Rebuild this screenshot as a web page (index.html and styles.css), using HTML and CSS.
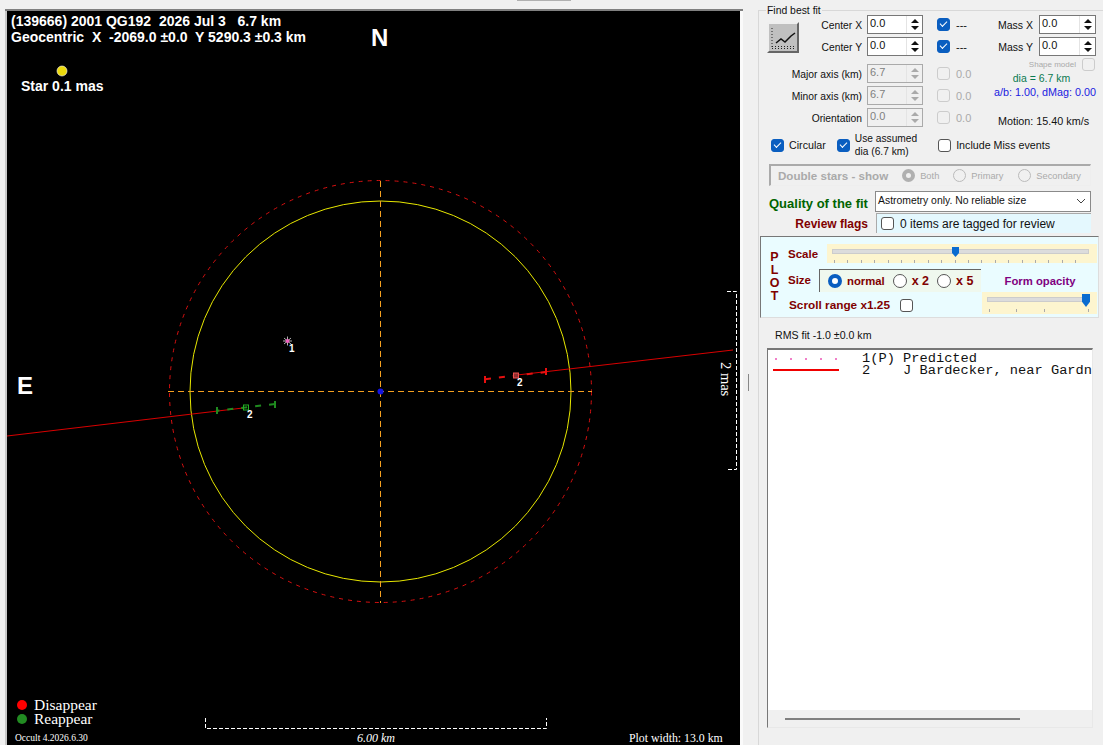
FILE: index.html
```html
<!DOCTYPE html>
<html lang="en">
<head>
  <meta charset="UTF-8" />
  <title>Asteroid observations - plot</title>
  <link rel="stylesheet" href="styles.css">
</head>
<body>

<div class="top-tab"></div>

<div class="window">
  <div class="plot-frame">
    <svg class="plot" width="733" height="734" viewBox="7 11 733 734">
      <rect x="7" y="11" width="733" height="734" fill="#000"/>

      <text class="title" x="11" y="26">(139666) 2001 QG192&#160; 2026 Jul 3&#160;&#160; 6.7 km</text>
      <text class="title" x="11" y="42">Geocentric&#160; X&#160; -2069.0 ±0.0&#160; Y 5290.3 ±0.3 km</text>
      <text class="compass" x="371" y="46">N</text>
      <text class="compass" x="17" y="394">E</text>

      <circle cx="62" cy="71" r="5" fill="#ecd90c" stroke="#fff" stroke-width="0.6"/>
      <text class="title" x="21" y="91">Star 0.1 mas</text>

      <circle cx="380.5" cy="391.5" r="211" class="limit"/>
      <circle cx="380.5" cy="391.5" r="190.5" class="outline"/>
      <line x1="380.5" y1="181" x2="380.5" y2="603" class="axis"/>
      <line x1="168" y1="391.5" x2="592" y2="391.5" class="axis"/>
      <circle cx="380.5" cy="391.5" r="3" fill="#1414e0"/>

      <!-- predicted star -->
      <g class="star-mark">
        <line x1="283" y1="341" x2="292" y2="341"/>
        <line x1="287.5" y1="336.5" x2="287.5" y2="345.5"/>
        <line x1="284" y1="338" x2="291" y2="344"/>
        <line x1="284" y1="344" x2="291" y2="338"/>
      </g>
      <circle cx="287.5" cy="341" r="2" fill="#f060c0"/>
      <text class="chord-no" x="289" y="352">1</text>

      <!-- chord 2 -->
      <line x1="7" y1="436" x2="243" y2="408" class="chord"/>
      <line x1="517" y1="375" x2="733" y2="350" class="chord"/>

      <line x1="217" y1="407" x2="217" y2="414" class="re"/>
      <line x1="275" y1="401" x2="275" y2="408" class="re"/>
      <line x1="275" y1="404" x2="217" y2="410.7" class="re re-dash"/>
      <rect x="243.5" y="405" width="5" height="5" class="re-box"/>
      <text class="chord-no" x="247" y="418">2</text>

      <line x1="485" y1="376" x2="485" y2="383" class="dis"/>
      <line x1="546" y1="368" x2="546" y2="375" class="dis"/>
      <line x1="485" y1="379.2" x2="546" y2="372" class="dis dis-dash"/>
      <rect x="513.5" y="373" width="5" height="5" class="dis-box"/>
      <text class="chord-no" x="517" y="386">2</text>

      <!-- scale bars -->
      <polyline points="205.5,718 205.5,728.5 546.5,728.5 546.5,718" class="bar"/>
      <polyline points="727,291.5 736.5,291.5 736.5,469.5 727,469.5" class="bar"/>
      <text class="bar-km" x="357" y="742">6.00 km</text>
      <text class="bar-mas" transform="translate(721 362) rotate(90)">2 mas</text>

      <circle cx="22" cy="705" r="5" fill="#ff0000"/>
      <circle cx="22" cy="719" r="5" fill="#228b22"/>
      <text class="legend" x="34" y="710">Disappear</text>
      <text class="legend" x="34" y="724">Reappear</text>
      <text class="version" x="15" y="741">Occult 4.2026.6.30</text>
      <text class="plot-width" x="629" y="742">Plot width: 13.0 km</text>
    </svg>
  </div>

  <div class="splitter"><span></span></div>

  <div class="side">
    <div class="group">
      <div class="group-title">Find best fit</div>

      <div class="fit-top">
        <div class="fit-grid">
          <div class="chart-btn">
            <svg width="28" height="27" viewBox="0 0 28 27">
              <path d="M3 4 V24" class="chart-dots"/>
              <path d="M3 22.5 H26" class="chart-dots"/>
              <path d="M3 24.5 H26" class="chart-dots"/>
              <path d="M7 19 L12 15 L16 18 L22 12 L26 9" class="chart-line"/>
            </svg>
          </div>

          <label class="lbl">Center X</label>
          <div class="spin"><span>0.0</span><div class="arrows"><i class="up"></i><i class="down"></i></div></div>
          <div class="check on"></div>
          <span class="val">---</span>

          <label class="lbl">Center Y</label>
          <div class="spin"><span>0.0</span><div class="arrows"><i class="up"></i><i class="down"></i></div></div>
          <div class="check on"></div>
          <span class="val">---</span>

          <label class="lbl">Major axis (km)</label>
          <div class="spin off"><span>6.7</span><div class="arrows"><i class="up"></i><i class="down"></i></div></div>
          <div class="check off"></div>
          <span class="val off">0.0</span>

          <label class="lbl">Minor axis (km)</label>
          <div class="spin off"><span>6.7</span><div class="arrows"><i class="up"></i><i class="down"></i></div></div>
          <div class="check off"></div>
          <span class="val off">0.0</span>

          <label class="lbl">Orientation</label>
          <div class="spin off"><span>0.0</span><div class="arrows"><i class="up"></i><i class="down"></i></div></div>
          <div class="check off"></div>
          <span class="val off">0.0</span>
        </div>

        <div class="mass">
          <div class="mass-row"><label>Mass X</label><div class="spin"><span>0.0</span><div class="arrows"><i class="up"></i><i class="down"></i></div></div></div>
          <div class="mass-row"><label>Mass Y</label><div class="spin"><span>0.0</span><div class="arrows"><i class="up"></i><i class="down"></i></div></div></div>
          <div class="shape"><span>Shape model</span><div class="check off"></div></div>
          <div class="dia">dia = 6.7 km</div>
          <div class="ab">a/b: 1.00, dMag: 0.00</div>
          <div class="motion">Motion: 15.40 km/s</div>
        </div>
      </div>

      <div class="opts">
        <div class="opt"><div class="check on"></div><span>Circular</span></div>
        <div class="opt opt-dia"><div class="check on"></div><span>Use assumed<br>dia (6.7 km)</span></div>
        <div class="opt"><div class="check"></div><span>Include Miss events</span></div>
      </div>

      <div class="double">
        <b>Double stars - show</b>
        <div class="radio-off sel"></div><span class="both">Both</span>
        <div class="radio-off"></div><span class="prim">Primary</span>
        <div class="radio-off"></div><span>Secondary</span>
      </div>

      <div class="quality">
        <b>Quality of the fit</b>
        <div class="combo"><span>Astrometry only. No reliable size</span>
          <svg width="10" height="6" viewBox="0 0 10 6"><path d="M1 1 L5 5 L9 1" class="combo-arrow"/></svg>
        </div>
      </div>
      <div class="review">
        <b>Review flags</b>
        <div class="flags"><div class="check"></div><span>0 items are tagged for review</span></div>
      </div>

      <div class="plot-box">
        <div class="letters">P<br>L<br>O<br>T</div>
        <div class="plot-ctl">
          <div class="scale-row">
            <b>Scale</b>
            <div class="slider slider-scale"><div class="track"></div><div class="thumb"></div><div class="ticks"></div></div>
          </div>
          <div class="ctl-low">
            <div class="ctl-left">
              <div class="size-row">
                <b>Size</b>
                <div class="size-box">
                  <div class="radio sel"></div><b>normal</b>
                  <div class="radio"></div><b class="times">x 2</b>
                  <div class="radio"></div><b class="times">x 5</b>
                </div>
              </div>
              <div class="scroll-row"><b>Scroll range x1.25</b><div class="check"></div></div>
            </div>
            <div class="ctl-right">
              <div class="opacity-lbl">Form opacity</div>
              <div class="slider slider-opacity"><div class="track"></div><div class="thumb"></div><div class="ticks"></div></div>
            </div>
          </div>
        </div>
      </div>

      <div class="rms">RMS fit -1.0 ±0.0 km</div>

      <div class="listbox">
        <div class="list-body">
          <div class="list-row"><span class="swatch dots"></span><pre>1(P) Predicted</pre></div>
          <div class="list-row"><span class="swatch solid"></span><pre>2    J Bardecker, near Gardn</pre></div>
        </div>
        <div class="hscroll"><span></span></div>
      </div>
    </div>
  </div>
</div>

</body>
</html>
```
FILE: styles.css
```css
html, body {
  margin: 0;
  height: 100%;
  overflow: hidden;
}
body {
  background: #f0f0f0;
  font-family: 'Liberation Sans', Arial, sans-serif;
  font-size: 11px;
  color: #111;
  width: 1103px;
  height: 745px;
  position: relative;
}
b { font-weight: bold; }

.top-tab {
  position: absolute;
  left: 517px;
  top: 0;
  width: 54px;
  height: 1px;
  background: #b0b0b0;
}

.window {
  display: flex;
  height: 745px;
}

/* plot */
.plot-frame {
  margin: 9px 0 0 5px;
  padding: 2px 3px 0 2px;
  background: linear-gradient(#808080, #808080) top left / 100% 2px no-repeat,
              linear-gradient(#c8c8c8, #c8c8c8) top left / 2px 100% no-repeat,
              #fafafa;
  width: 733px;
  height: 734px;
}
.plot { display: block; }

.title { font: bold 14px 'Liberation Sans', Arial, sans-serif; fill: #fff; }
.compass { font: bold 24px 'Liberation Sans', Arial, sans-serif; fill: #fff; }
.chord-no { font: bold 10px 'Liberation Sans', Arial, sans-serif; fill: #fff; }
.legend { font: 15.5px 'Liberation Serif', 'Times New Roman', serif; fill: #fff; }
.version { font: 9.5px 'Liberation Serif', 'Times New Roman', serif; fill: #fff; }
.plot-width { font: 11.8px 'Liberation Serif', 'Times New Roman', serif; fill: #fff; }
.bar-km { font: italic 12px 'Liberation Serif', 'Times New Roman', serif; fill: #fff; }
.bar-mas { font: 14.5px 'Liberation Serif', 'Times New Roman', serif; fill: #fff; }

.limit { fill: none; stroke: #d81010; stroke-width: 1; stroke-dasharray: 4 5; }
.outline { fill: none; stroke: #e8e800; stroke-width: 1; }
.axis { stroke: #f5a020; stroke-width: 1; stroke-dasharray: 6 4; }
.star-mark line { stroke: #b0b0b0; stroke-width: 1; }
.chord { stroke: #d80000; stroke-width: 1; }
.re { stroke: #1f8a1f; stroke-width: 2; }
.re-dash { stroke-dasharray: 6 8; }
.re-box { fill: none; stroke: #22b022; stroke-width: 1; }
.dis { stroke: #e81010; stroke-width: 2; }
.dis-dash { stroke-dasharray: 6 8; }
.dis-box { fill: #903030; stroke: #f05050; stroke-width: 1; }
.bar { fill: none; stroke: #fff; stroke-width: 1; stroke-dasharray: 4 2; }

.splitter {
  width: 15px;
  display: flex;
  align-items: center;
  justify-content: center;
}
.splitter span {
  display: block;
  width: 1px;
  height: 17px;
  background: #888;
  position: relative;
  top: 10px;
  left: -2px;
}

/* right panel */
.side {
  width: 345px;
  flex: none;
}
.group {
  margin-top: 10px;
  border-top: 1px solid #d8d8d8;
  border-left: 1px solid #d8d8d8;
  height: 735px;
  box-sizing: border-box;
  padding-left: 1px;
  position: relative;
}
.group-title {
  position: absolute;
  left: 7px;
  top: -7px;
  background: #f0f0f0;
  padding: 0 1px;
  line-height: 13px;
  font-size: 10.4px;
}

.fit-top {
  display: flex;
  justify-content: space-between;
  height: 116px;
  padding: 4px 7px 0 7px;
}
.fit-grid {
  display: grid;
  grid-template-columns: 100px 70px 13px 30px;
  grid-template-rows: 19px 24px 19px 19px 19px;
  row-gap: 3px;
  align-items: start;
}
.chart-btn {
  grid-area: 1 / 1 / 3 / 2;
  justify-self: start;
  margin-top: 7px;
  width: 32px;
  height: 31px;
  background: #c0c0c0;
  border: 2px solid;
  border-color: #efefef #666 #666 #efefef;
  box-sizing: border-box;
}
.chart-btn svg { display: block; }
.chart-dots { stroke: #222; stroke-width: 1; stroke-dasharray: 1 2; fill: none; }
.chart-line { stroke: #111; stroke-width: 1.5; fill: none; }

.lbl {
  text-align: right;
  white-space: nowrap;
  font-size: 10.3px;
  line-height: 21px;
  padding-right: 5px;
}
.lbl:nth-of-type(1) { grid-area: 1 / 1; }
.lbl:nth-of-type(2) { grid-area: 2 / 1; }

.spin {
  height: 19px;
  width: 56px;
  box-sizing: border-box;
  border: 1px solid #777;
  background: #fff;
  display: flex;
  justify-content: space-between;
  padding-left: 2px;
  line-height: 15px;
}
.spin.off { border-color: #aaa; background: #f0f0f0; color: #808080; }
.arrows {
  width: 15px;
  display: flex;
  flex-direction: column;
  align-items: center;
  justify-content: space-evenly;
  border-left: 1px solid #e4e4e4;
}
.arrows i { display: block; width: 0; height: 0; border-left: 4px solid transparent; border-right: 4px solid transparent; }
.arrows .up { border-bottom: 4px solid #111; }
.arrows .down { border-top: 4px solid #111; }
.spin.off .up { border-bottom-color: #aaa; }
.spin.off .down { border-top-color: #aaa; }

.check {
  width: 11px;
  height: 11px;
  border: 1px solid #555;
  border-radius: 3px;
  background: #fff;
  flex: none;
  position: relative;
}
.check.on { background: #0a5ec0; border-color: #0a5ec0; }
.check.on::after {
  content: "";
  position: absolute;
  left: 2px;
  top: 2px;
  width: 6px;
  height: 3px;
  border-left: 1px solid #fff;
  border-bottom: 1px solid #fff;
  transform: rotate(-45deg);
}
.check.off { border-color: #ccc; background: #f0f0f0; }
.val { white-space: nowrap; line-height: 21px; margin-left: 6px; font-size: 11px; }
.val.off { color: #aaa; }
.fit-grid .check { margin-top: 3px; }

.mass {
  width: 105px;
  flex: none;
  display: flex;
  flex-direction: column;
}
.mass-row {
  display: flex;
  justify-content: flex-end;
  gap: 6px;
  height: 19px;
  margin-bottom: 3px;
  font-size: 10.5px;
  line-height: 21px;
  white-space: nowrap;
}
.mass-row .spin { width: 57px; font-size: 11px; line-height: 15px; }
.shape {
  display: flex;
  justify-content: flex-end;
  align-items: center;
  gap: 6px;
  font-size: 8px;
  color: #aaa;
  height: 12px;
  margin-top: -1px;
  padding-right: 1px;
  white-space: nowrap;
}
.dia, .ab, .motion { line-height: 13px; white-space: nowrap; }
.dia { color: #0a7a50; font-size: 10.5px; text-align: center; margin: 2px 4px 0 0; }
.ab { color: #2020e0; font-size: 10.8px; text-align: right; margin-top: 1px; }
.motion { font-size: 10.8px; text-align: center; margin-top: 16px; }

.opts {
  display: flex;
  align-items: center;
  height: 28px;
  padding-left: 11px;
  gap: 11px;
  font-size: 10.7px;
}
.opt { display: flex; align-items: center; gap: 5px; white-space: nowrap; }
.opt-dia { margin-right: 10px; font-size: 10.2px; line-height: 13px; }

.double {
  margin: 5px 0 0 9px;
  width: 322px;
  height: 22px;
  box-sizing: border-box;
  border-style: solid;
  border-color: #aaa #eee #eee #aaa;
  border-width: 2px 1px 1px 2px;
  display: flex;
  align-items: center;
  padding-left: 7px;
  color: #aaa;
  font-size: 9.3px;
}
.double b { font-size: 11.6px; margin-right: 14px; }
.radio-off {
  width: 11px;
  height: 11px;
  border: 1px solid #bbb;
  border-radius: 50%;
  margin-right: 5px;
}
.radio-off.sel { background: #f0f0f0; border: 4px solid #b0b0b0; width: 5px; height: 5px; }
.both { margin-right: 14px; }
.prim { margin-right: 15px; }

.quality, .review {
  display: flex;
  align-items: center;
}
.quality { margin-top: 5px; height: 21px; color: #006400; padding-left: 9px; }
.quality b { width: 106px; flex: none; font-size: 13px; white-space: nowrap; padding-top: 3px; }
.combo {
  width: 216px;
  height: 21px;
  box-sizing: border-box;
  border: 1px solid #8a8a8a;
  background: #fff;
  display: flex;
  align-items: center;
  justify-content: space-between;
  padding: 0 4px 2px 2px;
  color: #111;
  font-size: 10.4px;
}
.combo-arrow { fill: none; stroke: #444; stroke-width: 1; }
.review { margin-top: 1px; height: 20px; color: #800000; }
.review b { width: 108px; flex: none; text-align: right; font-size: 12px; padding: 1px 8px 0 0; }
.flags {
  width: 215px;
  height: 20px;
  background: #e4f8fe;
  border-style: solid;
  border-color: #aaa;
  border-width: 1px 0 0 1px;
  box-sizing: border-box;
  display: flex;
  align-items: center;
  gap: 6px;
  padding-left: 4px;
  color: #111;
  font-size: 12px;
}

.plot-box {
  margin-top: 3px;
  width: 339px;
  height: 82px;
  box-sizing: border-box;
  background: #eafcff;
  border: 1px solid;
  border-color: #777 #ddd #ddd #777;
  display: flex;
  color: #800000;
}
.letters {
  width: 27px;
  flex: none;
  text-align: center;
  font-weight: bold;
  font-size: 12.5px;
  line-height: 13px;
  padding-top: 14px;
  box-sizing: border-box;
}
.plot-ctl { flex: 1; padding-top: 7px; }
.plot-ctl b { font-size: 11.5px; }
.scale-row { display: flex; align-items: center; height: 19px; }
.scale-row b { width: 39px; flex: none; }
.slider { position: relative; background: #fdf5cf; }
.slider-scale { width: 270px; height: 19px; }
.slider-opacity { width: 115px; height: 22px; }
.track {
  position: absolute;
  left: 5px;
  right: 8px;
  top: 5px;
  height: 3px;
  background: #dcdcdc;
  border: 1px solid #ccc;
}
.thumb {
  position: absolute;
  top: 3px;
  width: 7px;
  height: 10px;
  background: #0a6cd0;
  clip-path: polygon(0 0, 100% 0, 100% 60%, 50% 100%, 0 60%);
}
.slider-scale .thumb { left: 125px; }
.slider-opacity .thumb { left: 100px; width: 8px; height: 13px; top: 2px; }
.ticks {
  position: absolute;
  left: 7px;
  right: 8px;
  bottom: 0;
  height: 3px;
  background: repeating-linear-gradient(90deg, #aaa 0 1px, transparent 1px 13.4px);
}
.slider-opacity .ticks {
  background: linear-gradient(#aaa, #aaa) left / 1px 100% no-repeat,
              linear-gradient(#aaa, #aaa) 27px 0 / 1px 100% no-repeat,
              linear-gradient(#aaa, #aaa) 55px 0 / 1px 100% no-repeat,
              linear-gradient(#aaa, #aaa) right / 1px 100% no-repeat;
  bottom: 2px;
}
.ctl-low { display: flex; }
.ctl-left { width: 194px; flex: none; }
.size-row { display: flex; align-items: center; margin-top: 6px; height: 23px; }
.size-row > b { width: 31px; flex: none; padding-bottom: 2px; }
.size-box {
  width: 162px;
  height: 23px;
  box-sizing: border-box;
  background: #eff8ee;
  border-style: solid;
  border-width: 1px 0 0 1px;
  border-color: #666;
  display: flex;
  align-items: center;
  padding-left: 8px;
  color: #800000;
  white-space: nowrap;
}
.size-box b { font-size: 11.3px; }
.radio {
  width: 12px;
  height: 12px;
  border: 1px solid #555;
  border-radius: 50%;
  background: #fff;
  margin: 0 5px 0 8px;
  flex: none;
}
.radio.sel { margin-left: 0; border: 4px solid #0a5ec0; width: 6px; height: 6px; }
.size-box .times { font-size: 12.5px; }
.scroll-row { display: flex; align-items: center; gap: 10px; height: 22px; margin: 2px 0 0 1px; white-space: nowrap; }
.scroll-row b { font-size: 11.8px; }
.ctl-right { flex: 1; }
.opacity-lbl { color: #800080; font-weight: bold; font-size: 11.3px; text-align: center; margin-top: 11px; height: 18px; line-height: 14px; white-space: nowrap; }

.rms { margin: 11px 0 0 15px; font-size: 10.6px; height: 13px; line-height: 13px; }

.listbox {
  margin: 6px 0 0 7px;
  width: 326px;
  height: 380px;
  box-sizing: border-box;
  border-style: solid;
  border-width: 2px 1px 1px 1px;
  border-color: #777 #e8e8e8 #e8e8e8 #777;
  display: flex;
  flex-direction: column;
}
.list-body { flex: 1; background: #fff; padding-top: 3px; overflow: hidden; }
.list-row { display: flex; align-items: center; height: 12px; }
.list-row pre { margin: 0; font: 13.7px/12px 'Liberation Mono', 'Courier New', monospace; white-space: pre; }
.swatch { width: 66px; margin: 0 23px 0 5px; flex: none; height: 2px; }
.swatch.dots { background: repeating-linear-gradient(90deg, transparent 0 2px, #f080c8 2px 4px, transparent 4px 15px); }
.swatch.solid { background: #f00000; margin-bottom: 3px; }
.hscroll { height: 17px; background: #f0f0f0; display: flex; align-items: center; padding-left: 17px; }
.hscroll span { display: block; width: 235px; height: 2px; background: #808080; }
```
